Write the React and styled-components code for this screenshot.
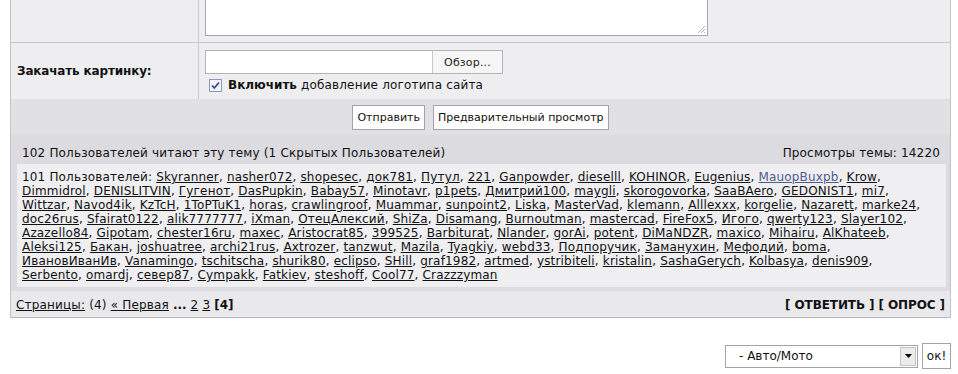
import React from "react";
import styled, { createGlobalStyle } from "styled-components";

const Global = createGlobalStyle`
  html, body { margin: 0; padding: 0; background: #fff; }
  body {
    font-family: Verdana, "DejaVu Sans", sans-serif;
    font-size: 12px;
    letter-spacing: 0.17px;
    color: #111;
  }
`;

const Page = styled.div`
  width: 958px;
  height: 374px;
  overflow: hidden;
  padding: 0 7px 0 10px;
  box-sizing: border-box;
`;

const FormTable = styled.div`
  border-left: 1px solid #c4c4c8;
  border-right: 1px solid #c4c4c8;
  background: #eeeef0;
`;

const FormRow = styled.div`
  display: grid;
  grid-template-columns: 188px 1fr;
  height: ${(p) => p.$h}px;
  border-bottom: ${(p) => (p.$last ? "none" : "1px solid #c8c8cc")};
  box-sizing: border-box;
`;

const LabelCell = styled.div`
  border-right: 1px solid #c8c8cc;
  display: flex;
  align-items: center;
  padding-left: 6px;
  font-weight: bold;
  letter-spacing: -0.15px;
`;

const ValueCell = styled.div`
  padding: ${(p) => p.$pad || "0 0 0 6px"};
  display: flex;
  flex-direction: column;
  gap: ${(p) => p.$gap || 0}px;
`;

const TextArea = styled.div`
  width: 503px;
  height: 36px;
  box-sizing: border-box;
  background: #fff;
  border: 1px solid #a8a8ac;
  border-top: none;
  position: relative;
`;

const Grip = styled.svg`
  position: absolute;
  right: 1px;
  bottom: 1px;
`;

const FileInput = styled.div`
  display: flex;
  width: 298px;
  height: 24px;
  box-sizing: border-box;
  border: 1px solid #b4b4b8;
  background: #fff;
`;

const FileField = styled.div`
  flex: 1;
`;

const BrowseBtn = styled.div`
  width: 69px;
  border-left: 1px solid #c8c8cc;
  background: #f6f6f6;
  display: flex;
  align-items: center;
  justify-content: center;
  color: #222;
  font-size: 11px;
`;

const CheckRow = styled.label`
  display: flex;
  align-items: center;
  gap: 6px;
  padding-left: 4px;
  white-space: nowrap;
`;

const Bold = styled.b`
  font-weight: bold;
  letter-spacing: 0;
`;

const ButtonRow = styled.div`
  background: #e1e1e4;
  height: 36px;
  display: flex;
  align-items: center;
  justify-content: center;
  gap: 8px;
  padding-top: 1px;
  box-sizing: border-box;
`;

const Btn = styled.div`
  height: 25px;
  box-sizing: border-box;
  padding: 0 4px;
  border: 1px solid #a4a4a8;
  background: #fff;
  display: flex;
  align-items: center;
  font-size: 11px;
  letter-spacing: 0;
  color: #111;
`;

const StatsFrame = styled.div`
  border-left: 1px solid #c4c4c8;
  border-right: 1px solid #c4c4c8;
`;

const Stats = styled.div`
  background: #dcdce0;
  padding-bottom: 4px;
`;

const StatsHead = styled.div`
  display: flex;
  justify-content: space-between;
  padding: 11px 10px 4px 11px;
  line-height: 14px;
`;

const UserBox = styled.div`
  margin: 0 4px 0 6px;
  background: #efeff2;
  padding: 6px 5px 5px;
  line-height: 14px;
  white-space: nowrap;
`;

const Link = styled.a`
  color: ${(p) => (p.$alt ? "#4d5c8c" : "#111")};
  text-decoration: underline;
`;

const PagerBar = styled.div`
  background: #e9e9ec;
  border-left: 1px solid #c4c4c8;
  border-right: 1px solid #c4c4c8;
  border-bottom: 1px solid #b8b8bc;
  height: 27px;
  display: flex;
  align-items: center;
  justify-content: space-between;
  padding: 1px 5px 0 5px;
  box-sizing: border-box;
`;

const Actions = styled.span`
  font-weight: bold;
  letter-spacing: -0.1px;
`;

const Footer = styled.div`
  display: flex;
  justify-content: flex-end;
  align-items: center;
  gap: 4px;
  margin-top: 25px;
  padding-right: 0;
`;

const SelectBox = styled.div`
  width: 193px;
  height: 23px;
  box-sizing: border-box;
  border: 1px solid #a4a4a8;
  background: #fff;
  display: flex;
  align-items: center;
`;

const SelectText = styled.span`
  flex: 1;
  padding-left: 13px;
  letter-spacing: 0;
`;

const Arrow = styled.div`
  width: 16px;
  height: 19px;
  margin-right: 1px;
  background: #ececec;
  border: 1px solid #c4c4c4;
  box-sizing: border-box;
  display: flex;
  align-items: center;
  justify-content: center;
`;

const OkBtn = styled.div`
  width: 29px;
  height: 26px;
  box-sizing: border-box;
  border: 1px solid #a4a4a8;
  background: #fff;
  display: flex;
  align-items: center;
  justify-content: center;
  letter-spacing: 0;
`;

const lines = [
  ["Skyranner", "nasher072", "shopesec", "док781", "Путул", "221", "Ganpowder", "dieselll", "KOHINOR", "Eugenius", "*MauopBuxpb", "Krow"],
  ["Dimmidrol", "DENISLITVIN", "Гугенот", "DasPupkin", "Babay57", "Minotavr", "p1pets", "Дмитрий100", "maygli", "skorogovorka", "SaaBAero", "GEDONIST1", "mi7"],
  ["Wittzar", "Navod4ik", "KzTcH", "1ToPTuK1", "horas", "crawlingroof", "Muammar", "sunpoint2", "Liska", "MasterVad", "klemann", "Alllexxx", "korgelie", "Nazarett", "marke24"],
  ["doc26rus", "Sfairat0122", "alik7777777", "iXman", "ОтецАлексий", "ShiZa", "Disamang", "Burnoutman", "mastercad", "FireFox5", "Игого", "qwerty123", "Slayer102"],
  ["Azazello84", "Gipotam", "chester16ru", "maxec", "Aristocrat85", "399525", "Barbiturat", "Nlander", "gorAi", "potent", "DiMaNDZR", "maxico", "Mihairu", "AlKhateeb"],
  ["Aleksi125", "Бакан", "joshuatree", "archi21rus", "Axtrozer", "tanzwut", "Mazila", "Tyagkiy", "webd33", "Подпоручик", "Заманухин", "Мефодий", "boma"],
  ["ИвановИванИв", "Vanamingo", "tschitscha", "shurik80", "eclipso", "SHill", "graf1982", "artmed", "ystribiteli", "kristalin", "SashaGerych", "Kolbasya", "denis909"],
  ["Serbento", "omardj", "север87", "Cympakk", "Fatkiev", "steshoff", "Cool77", "Crazzzyman"],
];

export default function App() {
  return (
    <Page>
      <Global />
      <FormTable>
        <FormRow $h={43}>
          <LabelCell />
          <ValueCell>
            <TextArea>
              <Grip width="10" height="10" viewBox="0 0 10 10">
                <path d="M9 2 L2 9 M9 5 L5 9 M9 8 L8 9" stroke="#b0b0b0" strokeWidth="1" />
              </Grip>
            </TextArea>
          </ValueCell>
        </FormRow>
        <FormRow $h={56} $last>
          <LabelCell>Закачать картинку:</LabelCell>
          <ValueCell $pad="7px 0 0 6px" $gap={4}>
            <FileInput>
              <FileField />
              <BrowseBtn>Обзор...</BrowseBtn>
            </FileInput>
            <CheckRow>
              <svg width="13" height="13" viewBox="0 0 13 13">
                <rect x="0.5" y="0.5" width="12" height="12" fill="#f4f4f8" stroke="#8a98b4" />
                <path d="M3 6.5 L5.3 9 L10 3.5" fill="none" stroke="#2c4a9a" strokeWidth="1.8" />
              </svg>
              <span>
                <Bold>Включить</Bold> добавление логотипа сайта
              </span>
            </CheckRow>
          </ValueCell>
        </FormRow>
        <ButtonRow>
          <Btn>Отправить</Btn>
          <Btn>Предварительный просмотр</Btn>
        </ButtonRow>
      </FormTable>
      <StatsFrame>
        <Stats>
          <StatsHead>
            <span>102 Пользователей читают эту тему (1 Скрытых Пользователей)</span>
            <span>Просмотры темы: 14220</span>
          </StatsHead>
          <UserBox>
            {lines.map((line, i) => (
              <div key={i}>
                {i === 0 && "101 Пользователей: "}
                {line.map((n, j) => {
                  const alt = n.startsWith("*");
                  const name = alt ? n.slice(1) : n;
                  const last = i === lines.length - 1 && j === line.length - 1;
                  return (
                    <React.Fragment key={j}>
                      <Link $alt={alt}>{name}</Link>
                      {last ? "" : ", "}
                    </React.Fragment>
                  );
                })}
              </div>
            ))}
          </UserBox>
        </Stats>
      </StatsFrame>
      <PagerBar>
        <span>
          <Link>Страницы:</Link> (4) <Link>« Первая</Link> <Bold>...</Bold> <Link>2</Link>{" "}
          <Link>3</Link> <Bold>[4]</Bold>
        </span>
        <Actions>[ ОТВЕТИТЬ ] [ ОПРОС ]</Actions>
      </PagerBar>
      <Footer>
        <SelectBox>
          <SelectText>- Авто/Мото</SelectText>
          <Arrow>
            <svg width="7" height="4" viewBox="0 0 7 4">
              <path d="M0 0 H7 L3.5 4 Z" fill="#000" />
            </svg>
          </Arrow>
        </SelectBox>
        <OkBtn>ок!</OkBtn>
      </Footer>
    </Page>
  );
}
